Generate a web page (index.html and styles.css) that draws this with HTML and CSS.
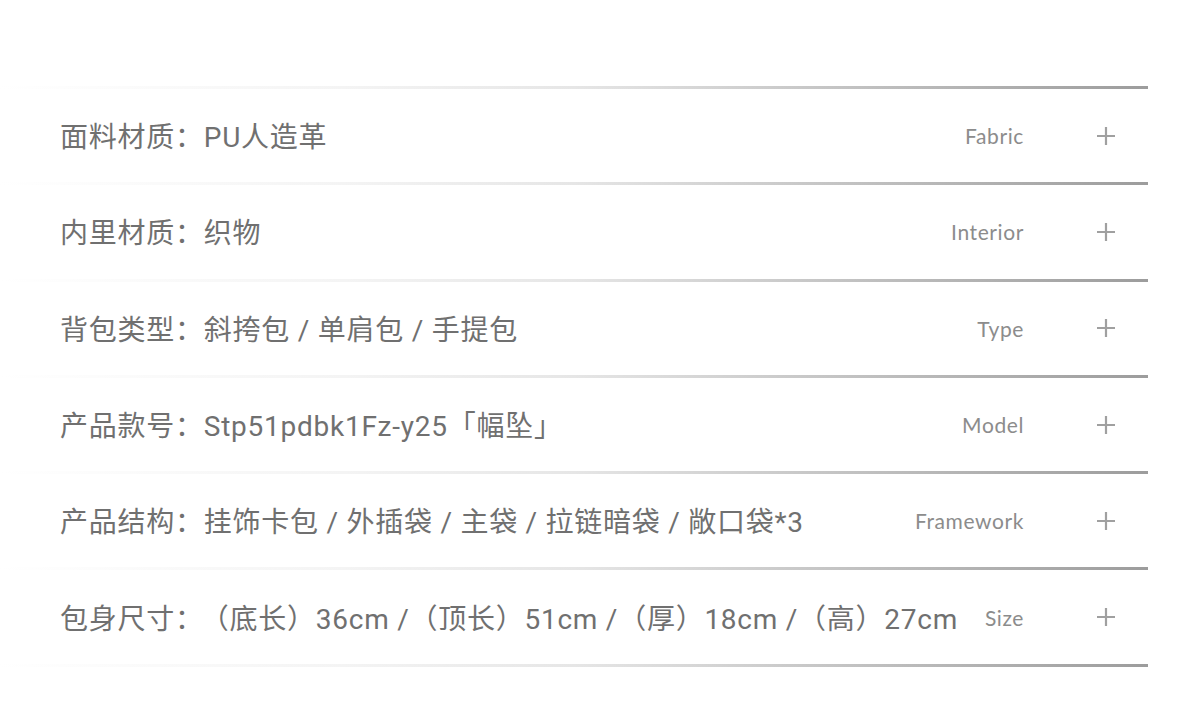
FILE: index.html
```html
<!DOCTYPE html>
<html lang="zh-CN">
<head>
<meta charset="utf-8">
<title>产品参数</title>
<link rel="stylesheet" href="styles.css">
</head>
<body>
<div class="specs">
  <div class="row">
    <div class="value">面料材质：PU人造革</div>
    <div class="label">Fabric</div>
    <svg class="plus" viewBox="0 0 20 20" width="20" height="20"><path d="M10 1V19M1 10H19"/></svg>
  </div>
  <div class="row">
    <div class="value">内里材质：织物</div>
    <div class="label">Interior</div>
    <svg class="plus" viewBox="0 0 20 20" width="20" height="20"><path d="M10 1V19M1 10H19"/></svg>
  </div>
  <div class="row">
    <div class="value">背包类型：斜挎包 / 单肩包 / 手提包</div>
    <div class="label">Type</div>
    <svg class="plus" viewBox="0 0 20 20" width="20" height="20"><path d="M10 1V19M1 10H19"/></svg>
  </div>
  <div class="row">
    <div class="value">产品款号：Stp51pdbk1Fz-y25「幅坠」</div>
    <div class="label">Model</div>
    <svg class="plus" viewBox="0 0 20 20" width="20" height="20"><path d="M10 1V19M1 10H19"/></svg>
  </div>
  <div class="row">
    <div class="value">产品结构：挂饰卡包 / 外插袋 / 主袋 / 拉链暗袋 / 敞口袋*3</div>
    <div class="label">Framework</div>
    <svg class="plus" viewBox="0 0 20 20" width="20" height="20"><path d="M10 1V19M1 10H19"/></svg>
  </div>
  <div class="row">
    <div class="value">包身尺寸：<span class="gap"></span>（底长）36cm /（顶长）51cm /（厚）18cm /（高）27cm</div>
    <div class="label">Size</div>
    <svg class="plus" viewBox="0 0 20 20" width="20" height="20"><path d="M10 1V19M1 10H19"/></svg>
  </div>
</div>
</body>
</html>
```

FILE: styles.css
```css
html, body {
  margin: 0;
  padding: 0;
  background: #ffffff;
}

body {
  padding-top: 86px;
  font-family: Roboto, "Noto Sans CJK SC", sans-serif;
}

.specs {
  width: 1148px;
  border-top: 3px solid transparent;
  border-image: linear-gradient(to right, rgba(250,250,250,0) 0%, #f4f4f4 30%, #e6e6e6 50%, #c8c8c8 70%, #9c9c9c 100%) 1;
}

.row {
  height: 93.3px;
  display: flex;
  align-items: center;
  padding-left: 60px;
  border-bottom: 3px solid transparent;
  border-image: linear-gradient(to right, rgba(250,250,250,0) 0%, #f4f4f4 30%, #e6e6e6 50%, #c8c8c8 70%, #9c9c9c 100%) 1;
}

.value {
  flex: 1;
  font-size: 28px;
  color: #707070;
  white-space: nowrap;
  letter-spacing: 0.75px;
  padding-bottom: 1px;
}

.gap {
  display: inline-block;
  width: 0;
  margin-left: -3px;
}

.label {
  font-family: Lato, "Noto Sans", sans-serif;
  font-size: 21px;
  color: #8c8c8c;
  width: 140px;
  text-align: right;
  letter-spacing: 0.6px;
}

.plus {
  margin-left: 72px;
  margin-right: 32px;
  flex: none;
}

.plus path {
  stroke: #a0a0a0;
  stroke-width: 2.2;
  fill: none;
}
```
